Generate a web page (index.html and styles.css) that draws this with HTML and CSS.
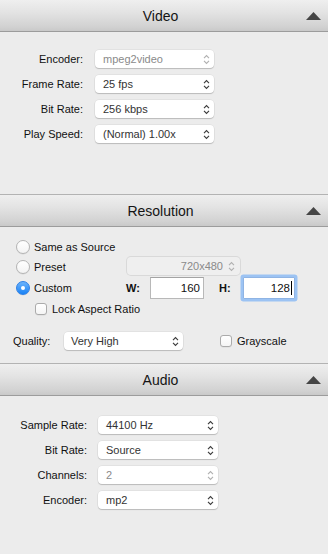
FILE: index.html
```html
<!DOCTYPE html>
<html>
<head>
<meta charset="utf-8">
<link rel="stylesheet" href="styles.css">
</head>
<body>
<div class="app">
  <section class="panel">
    <header class="panel-head first">
      <h2>Video</h2>
      <svg class="tri" width="15" height="8" viewBox="0 0 15 8"><path d="M7.5 0 L15 8 L0 8 Z"/></svg>
    </header>
    <div class="form-grid video-grid">
      <label>Encoder:</label>
      <div class="select disabled"><span>mpeg2video</span><svg width="7" height="11" viewBox="0 0 7 11"><path d="M1 4.2 L3.5 1.6 L6 4.2 M1 6.8 L3.5 9.4 L6 6.8"/></svg></div>
      <label>Frame Rate:</label>
      <div class="select"><span>25 fps</span><svg width="7" height="11" viewBox="0 0 7 11"><path d="M1 4.2 L3.5 1.6 L6 4.2 M1 6.8 L3.5 9.4 L6 6.8"/></svg></div>
      <label>Bit Rate:</label>
      <div class="select"><span>256 kbps</span><svg width="7" height="11" viewBox="0 0 7 11"><path d="M1 4.2 L3.5 1.6 L6 4.2 M1 6.8 L3.5 9.4 L6 6.8"/></svg></div>
      <label>Play Speed:</label>
      <div class="select"><span>(Normal) 1.00x</span><svg width="7" height="11" viewBox="0 0 7 11"><path d="M1 4.2 L3.5 1.6 L6 4.2 M1 6.8 L3.5 9.4 L6 6.8"/></svg></div>
    </div>
  </section>

  <section class="panel">
    <header class="panel-head">
      <h2>Resolution</h2>
      <svg class="tri" width="15" height="8" viewBox="0 0 15 8"><path d="M7.5 0 L15 8 L0 8 Z"/></svg>
    </header>
    <div class="res-body">
      <div class="res-row r1">
        <div class="choice"><span class="radio"></span><span>Same as Source</span></div>
      </div>
      <div class="res-row r2">
        <div class="choice wide"><span class="radio"></span><span>Preset</span></div>
        <div class="select preset disabled"><span>720x480</span><svg width="7" height="11" viewBox="0 0 7 11"><path d="M1 4.2 L3.5 1.6 L6 4.2 M1 6.8 L3.5 9.4 L6 6.8"/></svg></div>
      </div>
      <div class="res-row r3">
        <div class="choice wide2"><span class="radio on"></span><span>Custom</span></div>
        <span class="dim-label">W:</span>
        <div class="num-input w-input">160</div>
        <span class="dim-label h-label">H:</span>
        <div class="num-input h-input focused">128<span class="caret"></span></div>
      </div>
      <div class="res-row r4">
        <div class="choice"><span class="check"></span><span>Lock Aspect Ratio</span></div>
      </div>
      <div class="res-row quality">
        <label class="q-label">Quality:</label>
        <div class="select q-select"><span>Very High</span><svg width="7" height="11" viewBox="0 0 7 11"><path d="M1 4.2 L3.5 1.6 L6 4.2 M1 6.8 L3.5 9.4 L6 6.8"/></svg></div>
        <div class="choice gray"><span class="check"></span><span>Grayscale</span></div>
      </div>
    </div>
  </section>

  <section class="panel">
    <header class="panel-head">
      <h2>Audio</h2>
      <svg class="tri" width="15" height="8" viewBox="0 0 15 8"><path d="M7.5 0 L15 8 L0 8 Z"/></svg>
    </header>
    <div class="form-grid audio-grid">
      <label>Sample Rate:</label>
      <div class="select"><span>44100 Hz</span><svg width="7" height="11" viewBox="0 0 7 11"><path d="M1 4.2 L3.5 1.6 L6 4.2 M1 6.8 L3.5 9.4 L6 6.8"/></svg></div>
      <label>Bit Rate:</label>
      <div class="select"><span>Source</span><svg width="7" height="11" viewBox="0 0 7 11"><path d="M1 4.2 L3.5 1.6 L6 4.2 M1 6.8 L3.5 9.4 L6 6.8"/></svg></div>
      <label>Channels:</label>
      <div class="select disabled"><span>2</span><svg width="7" height="11" viewBox="0 0 7 11"><path d="M1 4.2 L3.5 1.6 L6 4.2 M1 6.8 L3.5 9.4 L6 6.8"/></svg></div>
      <label>Encoder:</label>
      <div class="select"><span>mp2</span><svg width="7" height="11" viewBox="0 0 7 11"><path d="M1 4.2 L3.5 1.6 L6 4.2 M1 6.8 L3.5 9.4 L6 6.8"/></svg></div>
    </div>
  </section>
</div>
</body>
</html>
```

FILE: styles.css
```css
* { box-sizing: border-box; }
html, body {
  margin: 0;
  padding: 0;
  background: #ececec;
}
body {
  width: 328px;
  height: 554px;
  overflow: hidden;
  font-family: "Liberation Sans", Arial, sans-serif;
  font-size: 11px;
  color: #111;
}

.panel-head {
  display: grid;
  grid-template-columns: 1fr auto 1fr;
  align-items: center;
  height: 33px;
  padding-right: 7px;
  border-top: 1px solid #b3b3b3;
  border-bottom: 1px solid #9c9c9c;
  background: linear-gradient(#efefef 0%, #e3e3e3 40%, #d2d2d2 85%, #c9c9c9 100%);
}
.panel-head.first {
  height: 32px;
  border-top: none;
}
.panel-head h2 {
  grid-column: 2;
  margin: 0;
  font-size: 14px;
  font-weight: normal;
  color: #141414;
  line-height: 16px;
}
.tri {
  grid-column: 3;
  justify-self: end;
  fill: #454545;
}

.form-grid {
  display: grid;
  row-gap: 7px;
  align-items: center;
}
.form-grid label {
  text-align: right;
  color: #111;
}
.video-grid {
  grid-template-columns: 83px 119px;
  column-gap: 12px;
  padding: 18px 0 51px 0;
}
.audio-grid {
  grid-template-columns: 87px 120px;
  column-gap: 11px;
  padding: 20px 0 45px 0;
}

.select {
  height: 18px;
  display: flex;
  align-items: center;
  justify-content: space-between;
  padding: 0 4px 0 8px;
  background: #fff;
  border-radius: 4px;
  box-shadow: 0 0 0 0.5px rgba(0,0,0,0.08), 0 1px 1px rgba(0,0,0,0.18);
  color: #333;
  font-size: 11px;
}
.select svg {
  fill: none;
  stroke: #3a3a3a;
  stroke-width: 1.1;
  flex: none;
}
.select.disabled {
  color: #8a8a8a;
}
.select.disabled svg {
  stroke: #b0b0b0;
}

.res-body {
  padding: 10px 0 13px 0;
}
.res-row {
  display: flex;
  align-items: center;
  height: 20px;
}
.r1, .r2, .r3 { padding-left: 16px; }
.r3 { height: 22px; }
.r4 { padding-left: 35px; }

.choice {
  display: flex;
  align-items: center;
  gap: 4px;
  color: #111;
}
.choice.wide { width: 111px; }
.choice.wide2 { width: 110px; }

.radio {
  width: 14px;
  height: 14px;
  border-radius: 50%;
  background: linear-gradient(#ffffff, #f3f3f3);
  border: 1px solid #b4b4b4;
  box-shadow: 0 0.5px 0.5px rgba(0,0,0,0.1);
  display: flex;
  align-items: center;
  justify-content: center;
  flex: none;
}
.radio.on {
  background: linear-gradient(#6cb3fb, #1a83f6);
  border-color: #2d80e6;
}
.radio.on::after {
  content: "";
  width: 4px;
  height: 4px;
  border-radius: 50%;
  background: #fff;
}

.check {
  width: 12px;
  height: 12px;
  border-radius: 3px;
  background: linear-gradient(#ffffff, #f5f5f5);
  border: 1px solid #ababab;
  box-shadow: 0 0.5px 0.5px rgba(0,0,0,0.08);
  flex: none;
}
.r4 .choice, .gray { gap: 5px; }

.select.preset {
  width: 113px;
  justify-content: flex-end;
  gap: 5px;
  padding-right: 5px;
  background: #efefef;
  box-shadow: 0 0 0 1px #d9d9d9;
  margin-top: -2px;
}

.dim-label {
  width: 24px;
  font-weight: bold;
  color: #111;
}
.h-label { margin-left: 15px; }

.num-input {
  height: 22px;
  background: #fff;
  border: 1px solid #b8b8b8;
  border-top-color: #a3a3a3;
  display: flex;
  align-items: center;
  justify-content: flex-end;
  font-size: 11.5px;
  color: #111;
}
.w-input {
  width: 54px;
  padding-right: 3px;
}
.h-input {
  width: 52px;
  padding-right: 2px;
}
.h-input.focused {
  border-color: #8fb4e4;
  border-radius: 1px;
  box-shadow: 0 0 0 2.5px #9cc3f3;
}
.caret {
  width: 1px;
  height: 14px;
  background: #000;
  margin-left: 1px;
}

.quality {
  padding-left: 13px;
  margin-top: 13px;
  height: 18px;
}
.q-label {
  width: 51px;
  color: #111;
}
.q-select {
  width: 119px;
  padding-left: 7px;
}
.gray {
  margin-left: 37px;
}
```
